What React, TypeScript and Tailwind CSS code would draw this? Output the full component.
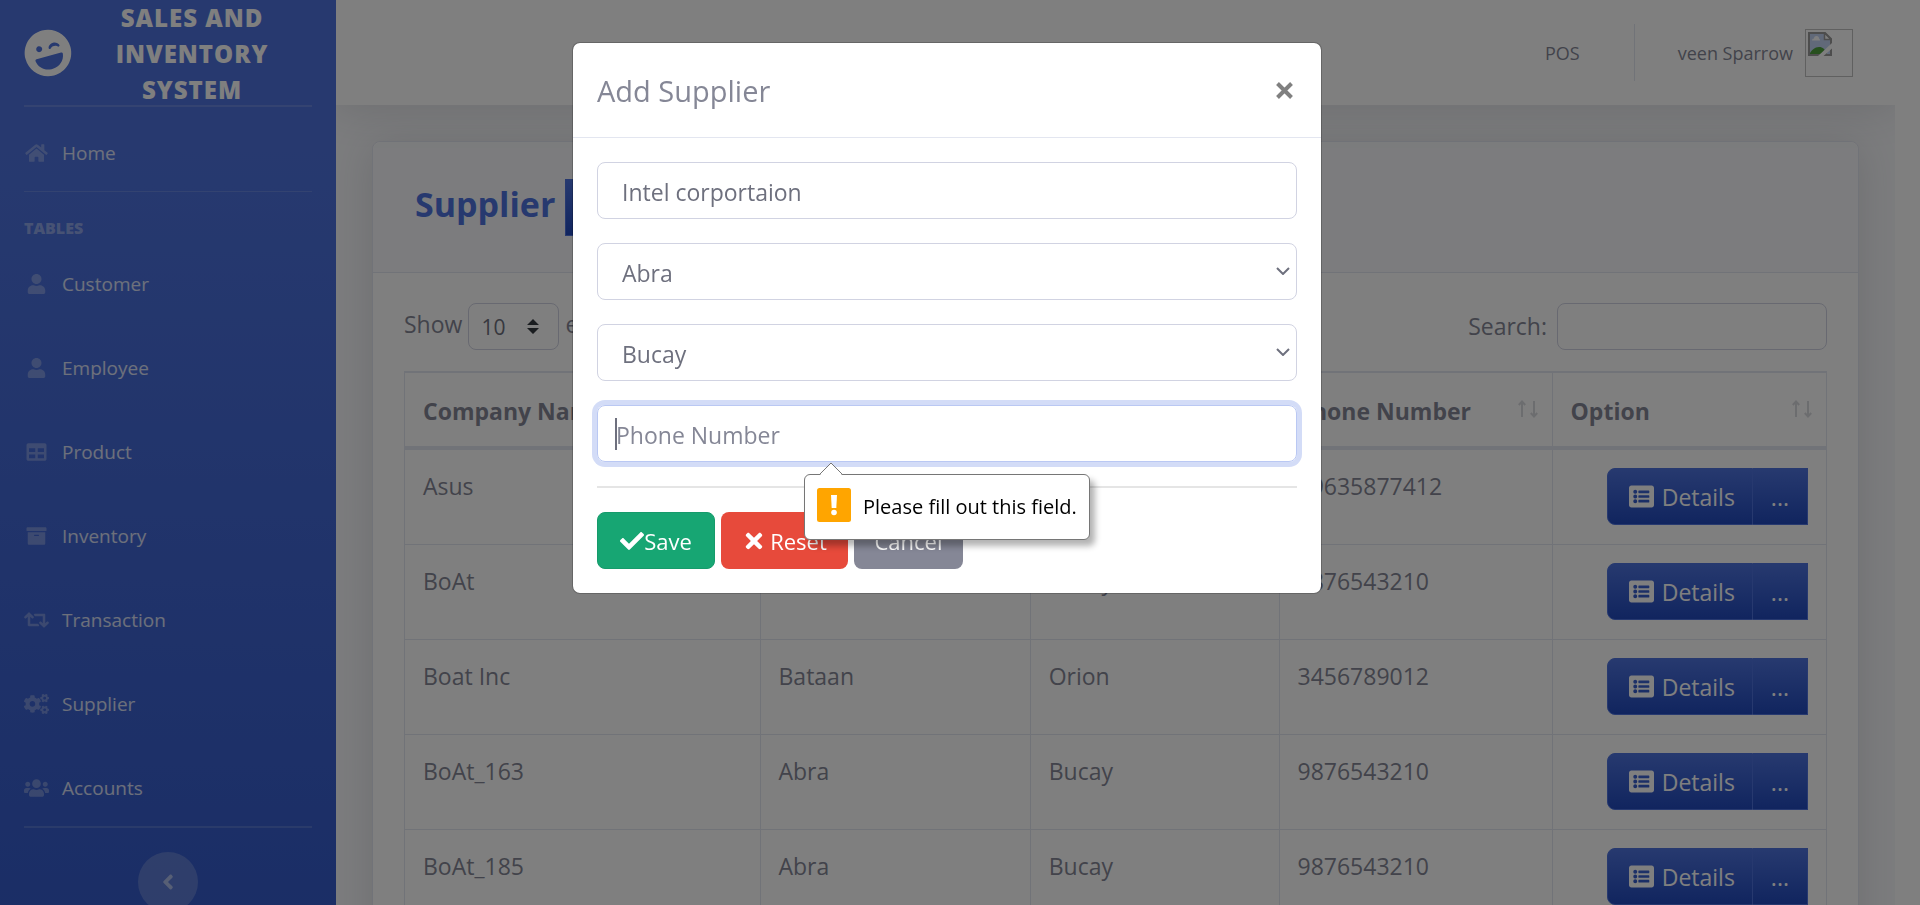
import React from "react";
import {
  FaAngleLeft,
  FaArchive,
  FaCheck,
  FaCogs,
  FaHome,
  FaLaughWink,
  FaListAlt,
  FaPlus,
  FaRetweet,
  FaTable,
  FaTimes,
  FaUser,
  FaUsers,
} from "react-icons/fa";
import type { IconType } from "react-icons";

const navItems: { label: string; icon: IconType }[] = [
  { label: "Customer", icon: FaUser },
  { label: "Employee", icon: FaUser },
  { label: "Product", icon: FaTable },
  { label: "Inventory", icon: FaArchive },
  { label: "Transaction", icon: FaRetweet },
  { label: "Supplier", icon: FaCogs },
  { label: "Accounts", icon: FaUsers },
];

const columns = [
  { label: "Company Name", width: "w-[25%]" },
  { label: "Province", width: "w-[19%]" },
  { label: "City", width: "w-[17.5%]" },
  { label: "Phone Number", width: "w-[19.2%]" },
  { label: "Option", width: "w-[19.3%]" },
];

const suppliers = [
  ["Asus", "Abra", "Bucay", "09635877412"],
  ["BoAt", "Abra", "Bucay", "9876543210"],
  ["Boat Inc", "Bataan", "Orion", "3456789012"],
  ["BoAt_163", "Abra", "Bucay", "9876543210"],
  ["BoAt_185", "Abra", "Bucay", "9876543210"],
];

function NavLink({ label, icon: Icon }: { label: string; icon: IconType }) {
  return (
    <a href="#" className="flex h-[84px] shrink-0 items-center gap-[13px] text-[19px] text-white/80">
      <Icon className="h-5 w-[25px] shrink-0 text-white/30" />
      {label}
    </a>
  );
}

function Sidebar() {
  return (
    <nav className="flex w-[336px] shrink-0 flex-col bg-[linear-gradient(180deg,#4e73df_150px,#224abe_1500px)] px-6">
      <a href="#" className="flex h-[105px] shrink-0 items-center text-white">
        <FaLaughWink className="size-12 shrink-0 -rotate-15" />
        <span className="flex-1 px-6 pt-0.5 text-center text-[24px] leading-9 font-extrabold tracking-[1px] uppercase">
          Sales and Inventory System
        </span>
      </a>
      <hr className="border-t-2 border-white/15" />
      <div className="pt-1">
        <NavLink label="Home" icon={FaHome} />
      </div>
      <hr className="-mt-1 border-white/15" />
      <h2 className="pt-6 pb-0.5 text-[16px] leading-6 font-extrabold text-white/40 uppercase">
        Tables
      </h2>
      {navItems.map((item) => (
        <NavLink key={item.label} {...item} />
      ))}
      <hr className="-mt-1 border-t-2 border-white/15" />
      <button
        type="button"
        aria-label="Collapse sidebar"
        className="mt-6 flex size-[60px] shrink-0 items-center justify-center self-center rounded-full bg-white/20 text-white/50"
      >
        <FaAngleLeft className="size-6" />
      </button>
    </nav>
  );
}

function BrokenImage() {
  return (
    <svg viewBox="0 0 24 24" className="size-6" aria-hidden="true">
      <path d="M1 1h16l6 6v16H1z" fill="#c3d3f3" />
      <path d="M4 8.500a2 2 0 0 1 2-2 2.500 2.500 0 0 1 5 0 2 2 0 0 1 1 2z" fill="#fff" />
      <path d="M1 23c2-5 6-8 10-8s6 2 8 8z" fill="#4ea03c" />
      <path d="M1 24V1h16l6 6v17M1 23h22" fill="none" stroke="#9a9a9a" strokeWidth="2" />
      <path d="M16.500 1v6.500H23z" fill="#fff" stroke="#9a9a9a" strokeWidth="1.500" />
      <path d="M24 11v5.500L15.500 24H10z" fill="#fff" />
    </svg>
  );
}

function Topbar() {
  return (
    <header className="relative z-10 flex h-[105px] shrink-0 items-center justify-end bg-white pr-[42px] text-[18px] text-[#858796] shadow-[0_4px_42px_0_rgba(58,59,69,0.15)]">
      <a href="#">POS</a>
      <span className="mr-[43px] ml-[54px] h-[57px] border-r border-[#e3e6f0]" />
      <a href="#" className="flex items-center gap-3">
        veen Sparrow
        <span className="size-12 border border-[#c0c0c0] p-0.5">
          <BrokenImage />
        </span>
      </a>
    </header>
  );
}

function SortArrows() {
  return (
    <svg viewBox="0 0 20 18" className="h-[18px] w-5 opacity-30" fill="none" stroke="currentColor" strokeWidth="2" aria-hidden="true">
      <path d="M4 17V2M.8 5 4 1.500 7.200 5M16 1v15M12.800 13l3.200 3.500 3.200-3.500" />
    </svg>
  );
}

function SupplierTable() {
  return (
    <table className="mt-[21px] w-full table-fixed border-collapse">
      <thead>
        <tr className="h-[76px]">
          {columns.map((column) => (
            <th
              key={column.label}
              className={`${column.width} border border-t-2 border-b-4 border-[#e3e6f0] px-[18px] pt-0.5 text-left font-bold`}
            >
              <div className="flex items-center justify-between whitespace-nowrap">
                {column.label}
                <span className="-mr-1 pb-1">
                  <SortArrows />
                </span>
              </div>
            </th>
          ))}
        </tr>
      </thead>
      <tbody>
        {suppliers.map((row) => (
          <tr key={row[0]}>
            {row.map((cell, i) => (
              <td key={i} className="border border-[#e3e6f0] px-[18px] pt-[18px] align-top">
                {cell}
              </td>
            ))}
            <td className="border border-[#e3e6f0] px-[18px] pt-[18px] pb-[19px]">
              <div className="flex justify-end text-white">
                <a
                  href="#"
                  className="flex h-[57px] items-center gap-2 rounded-l-lg border border-[#4e73df] bg-linear-to-b from-[#4e73df] to-[#224abe] pr-[17px] pl-[21px]"
                >
                  <FaListAlt className="size-[25px]" />
                  Details
                </a>
                <button
                  type="button"
                  aria-label="More options"
                  className="h-[57px] border border-l-0 border-[#4e73df] bg-linear-to-b from-[#4e73df] to-[#224abe] px-[18px]"
                >
                  ...
                </button>
              </div>
            </td>
          </tr>
        ))}
      </tbody>
    </table>
  );
}

function SupplierCard() {
  return (
    <section className="rounded-lg border border-[#e3e6f0] bg-white shadow-[0_4px_42px_0_rgba(58,59,69,0.15)]">
      <div className="flex h-[131px] items-center gap-2.5 rounded-t-lg border-b border-[#e3e6f0] bg-[#f8f9fc] pl-[42px]">
        <h1 className="pb-1.5 text-[34px] font-bold text-[#4e73df]">Supplier</h1>
        <button
          type="button"
          aria-label="Add supplier"
          className="h-[57px] border border-[#4e73df] bg-linear-to-b from-[#4e73df] to-[#224abe] px-[18px] text-white"
        >
          <FaPlus />
        </button>
      </div>
      <div className="px-[31px] py-[30px]">
        <div className="flex items-center justify-between">
          <div className="flex items-center gap-1.5">
            <label htmlFor="page-size" className="pb-1.5">
              Show
            </label>
            <div className="relative">
              <select
                id="page-size"
                className="h-[47px] w-[91px] appearance-none rounded-lg border border-[#d1d3e2] bg-white pl-3 text-[21px] text-[#6e707e]"
              >
                <option>10</option>
                <option>25</option>
                <option>50</option>
              </select>
              <svg viewBox="0 0 12 15" className="pointer-events-none absolute top-4 right-5 h-[15px] w-3" fill="#343a40" aria-hidden="true">
                <path d="M6 0l6 6H0zM0 9h12l-6 6z" />
              </svg>
            </div>
            <span className="pb-1.5">entries</span>
          </div>
          <div className="flex items-center gap-2.5">
            <label htmlFor="search" className="pb-0.5">
              Search:
            </label>
            <input
              id="search"
              type="search"
              className="h-[47px] w-[270px] rounded-lg border border-[#d1d3e2] bg-white px-3"
            />
          </div>
        </div>
        <SupplierTable />
      </div>
    </section>
  );
}

function ModalSelect({ label, options }: { label: string; options: string[] }) {
  return (
    <div className="relative">
      <select
        aria-label={label}
        className="h-[57px] w-full appearance-none rounded-lg border border-[#d1d3e2] bg-white pt-0.5 pl-6 text-[#6e707e]"
      >
        {options.map((option) => (
          <option key={option}>{option}</option>
        ))}
      </select>
      <svg
        viewBox="0 0 14 8"
        className="pointer-events-none absolute top-6 right-[7px] h-2 w-3.5"
        fill="none"
        stroke="#6e707e"
        strokeWidth="2"
        aria-hidden="true"
      >
        <path d="M1 1l6 6 6-6" />
      </svg>
    </div>
  );
}

function ValidationTip() {
  return (
    <div
      role="alert"
      className="absolute top-[69px] left-[207px] z-10 flex h-[66px] w-[286px] items-center gap-3 rounded-md border border-[#767676] bg-white pl-3 text-[20px] whitespace-nowrap text-black shadow-[5px_6px_6px_rgba(0,0,0,0.3)]"
    >
      <svg viewBox="0 0 24 13" className="absolute -top-[13px] left-3.5 h-[13px] w-6" aria-hidden="true">
        <path d="M1 13 12 1l11 12z" fill="#fff" />
        <path d="M.5 12.500 12 1l11.500 11.500" fill="none" stroke="#767676" />
      </svg>
      <svg viewBox="0 0 34 34" className="mb-1 size-[34px] shrink-0" aria-hidden="true">
        <rect width="34" height="34" rx="2.500" fill="#ffa500" />
        <path d="M14 7h6l-.7 13h-4.600z" fill="#fff" />
        <circle cx="17" cy="24.500" r="2.800" fill="#fff" />
      </svg>
      Please fill out this field.
    </div>
  );
}

function AddSupplierModal() {
  return (
    <div className="fixed inset-0 z-20 flex items-start justify-center bg-black/50 pt-[42px] pr-[26px]">
      <div
        role="dialog"
        aria-label="Add Supplier"
        className="w-full max-w-[750px] rounded-lg border border-black/20 bg-white bg-clip-padding"
      >
        <div className="flex h-[95px] items-center justify-between border-b border-[#e3e6f0] pr-7 pl-6">
          <h2 className="pt-0.5 text-[29px]">Add Supplier</h2>
          <button type="button" aria-label="Close" className="text-[#808080]">
            <svg viewBox="0 0 17 17" className="size-[17px]" fill="none" stroke="currentColor" strokeWidth="4" aria-hidden="true">
              <path d="M1.500 1.500l14 14M15.500 1.500l-14 14" />
            </svg>
          </button>
        </div>
        <form className="flex flex-col gap-6 p-6">
          <input
            aria-label="Company Name"
            defaultValue="Intel corportaion"
            className="h-[57px] w-full rounded-lg border border-[#d1d3e2] pt-0.5 pl-6 text-[#6e707e]"
          />
          <ModalSelect label="Province" options={["Abra", "Bataan"]} />
          <ModalSelect label="City" options={["Bucay", "Orion"]} />
          <div className="relative">
            <input
              aria-label="Phone Number"
              placeholder="Phone Number"
              className="h-[57px] w-full rounded-lg border border-[#bac8f3] pt-0.5 pl-[18px] text-[#6e707e] ring-5 ring-[#d3dcf7] outline-none placeholder:text-[#858796]"
            />
            <span className="absolute top-[13px] left-[18px] h-8 w-0.5 bg-[#6e707e]" />
            <ValidationTip />
          </div>
          <hr className="border-t-2 border-black/10" />
          <div className="flex gap-1.5 text-[22px] text-white">
            <button
              type="submit"
              className="flex h-[57px] w-[118px] items-center justify-center rounded-lg border border-[#169b6b] bg-[#17a673]"
            >
              <FaCheck className="size-6" />
              Save
            </button>
            <button
              type="reset"
              className="flex h-[57px] w-[127px] items-center justify-center gap-1 rounded-lg bg-[#e74a3b]"
            >
              <FaTimes className="size-6" />
              Reset
            </button>
            <button
              type="button"
              className="h-[57px] w-[109px] rounded-lg bg-[#858796]"
            >
              Cancel
            </button>
          </div>
        </form>
      </div>
    </div>
  );
}

export default function App() {
  return (
    <div className="flex h-screen overflow-hidden bg-white pr-[25px] font-['Open_Sans','Noto_Sans',sans-serif] text-[23px] leading-9 text-[#858796]">
      <Sidebar />
      <div className="flex min-w-0 flex-1 flex-col overflow-hidden bg-[#f8f9fc]">
        <Topbar />
        <main className="px-9 pt-9">
          <SupplierCard />
        </main>
      </div>
      <AddSupplierModal />
    </div>
  );
}
